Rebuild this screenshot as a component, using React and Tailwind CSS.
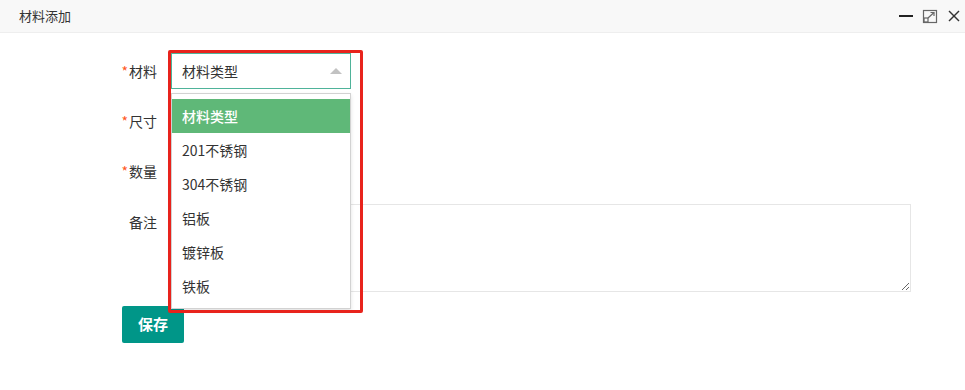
import { useState } from "react";

const options = ["材料类型", "201不锈钢", "304不锈钢", "铝板", "镀锌板", "铁板"];

function FormLabel({ required, children }) {
  return (
    <label className="w-[157px] shrink-0 text-right text-[14px] leading-[36px] text-[#333]">
      {required && <span className="text-[#ff5722] mr-[1px]">*</span>}
      {children}
    </label>
  );
}

function HeaderIcons() {
  return (
    <div className="flex items-center h-full">
      <svg width="16" height="16" viewBox="0 0 16 16" className="mr-[8px]">
        <line x1="1" y1="8" x2="15" y2="8" stroke="#222" strokeWidth="2" />
      </svg>
      <svg width="16" height="16" viewBox="0 0 16 16" className="mr-[10px]">
        <rect x="1.5" y="2.5" width="13" height="12" fill="none" stroke="#666" strokeWidth="1.2" />
        <rect x="2" y="10" width="4" height="4" fill="none" stroke="#666" strokeWidth="1.2" />
        <line x1="6" y1="10" x2="12" y2="4.5" stroke="#666" strokeWidth="1.2" />
        <polyline points="8.5,4.5 12,4.5 12,8" fill="none" stroke="#666" strokeWidth="1.2" />
      </svg>
      <svg width="12" height="12" viewBox="0 0 12 12">
        <line x1="1" y1="1" x2="11" y2="11" stroke="#333" strokeWidth="1.4" />
        <line x1="11" y1="1" x2="1" y2="11" stroke="#333" strokeWidth="1.4" />
      </svg>
    </div>
  );
}

export default function App() {
  const [selected] = useState(0);

  return (
    <div
      className="w-[965px] h-[390px] bg-white overflow-hidden"
      style={{ fontFamily: '"Noto Sans CJK SC", "Liberation Sans", sans-serif' }}
    >
      <div className="h-[33px] bg-[#f8f8f8] border-b border-[#eee] flex items-center justify-between pl-[19px] pr-[5px]">
        <span className="text-[13px] text-[#333]">材料添加</span>
        <HeaderIcons />
      </div>

      <div className="pt-[20px]">
        <div className="flex">
          <FormLabel required>材料</FormLabel>
          <div className="relative ml-[14px] w-[180px] h-[36px]">
            <div className="h-full border border-[#4fb39a] bg-white flex items-center pl-[10px] text-[14px] text-[#333]">
              材料类型
            </div>
            <span className="absolute right-[9px] top-[15px] w-0 h-0 border-x-[6px] border-x-transparent border-b-[6px] border-b-[#c2c2c2]" />
            <div className="absolute left-0 top-[40px] w-[180px] z-10 bg-white border border-[#d2d2d2] py-[5px] shadow-[0_2px_4px_rgba(0,0,0,0.12)]">
              {options.map((o, i) => (
                <div
                  key={o}
                  className={
                    i === selected
                      ? "h-[34px] leading-[34px] pl-[10px] text-[14px] bg-[#5fb878] text-white font-medium"
                      : "h-[34px] leading-[34px] pl-[10px] text-[14px] text-[#333]"
                  }
                >
                  {o}
                </div>
              ))}
            </div>
            <div className="absolute left-[-3px] top-[-3px] w-[195px] h-[263px] border-[3px] border-[#e8231c] rounded-[2px] z-20 pointer-events-none" />
          </div>
        </div>

        <div className="flex mt-[14px]">
          <FormLabel required>尺寸</FormLabel>
          <input className="ml-[14px] w-[180px] h-[36px] border border-[#e6e6e6] outline-none" />
        </div>

        <div className="flex mt-[14px]">
          <FormLabel required>数量</FormLabel>
          <input className="ml-[14px] w-[180px] h-[36px] border border-[#e6e6e6] outline-none" />
        </div>

        <div className="flex mt-[15px]">
          <FormLabel>备注</FormLabel>
          <textarea className="ml-[14px] w-[740px] h-[88px] border border-[#e6e6e6] outline-none block" />
        </div>

        <div className="mt-[14px] pl-[122px]">
          <button className="w-[62px] h-[37px] bg-[#009688] rounded-[2px] text-white text-[15px] font-bold">
            保存
          </button>
        </div>
      </div>
    </div>
  );
}
